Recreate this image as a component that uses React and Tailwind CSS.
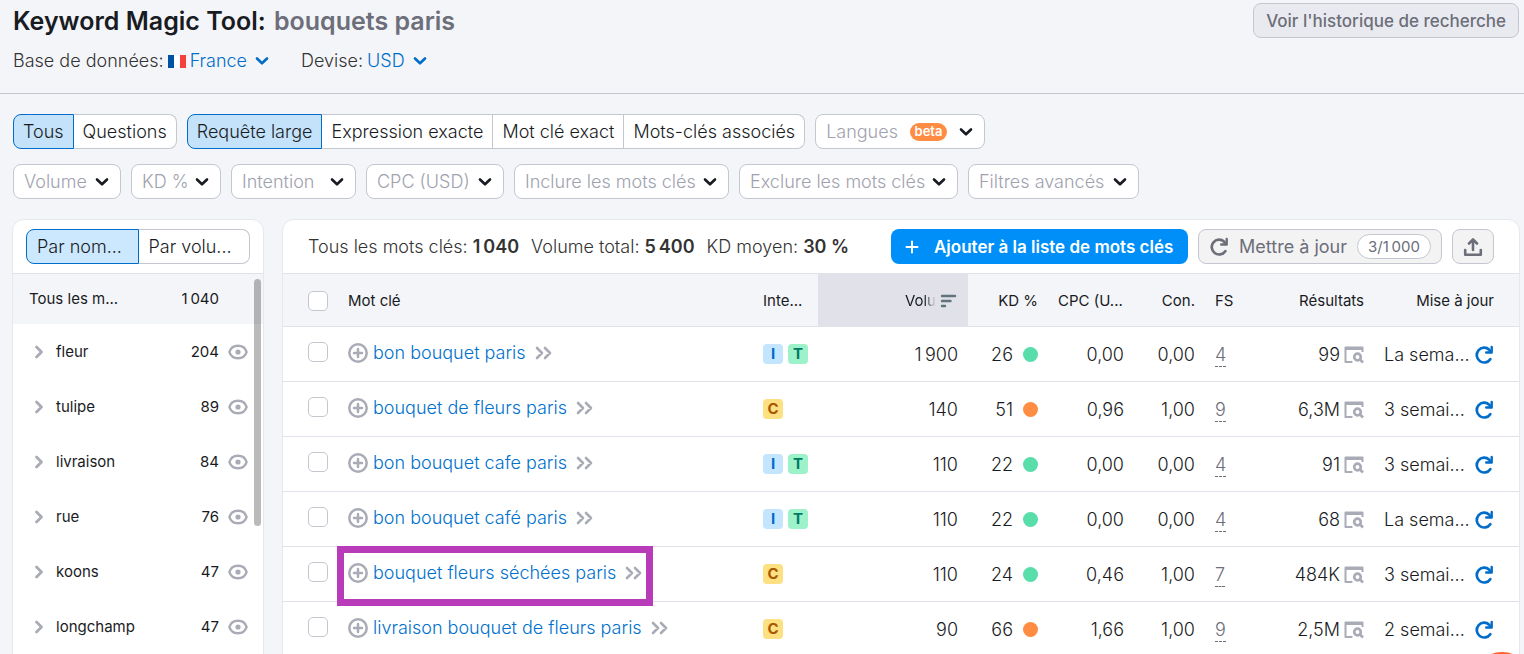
import { useState } from "react";

const matchTypes = [
  "Requête large",
  "Expression exacte",
  "Mot clé exact",
  "Mots-clés associés",
];

const filters = [
  { label: "Volume", width: "w-[108px]" },
  { label: "KD %", width: "w-[90px]" },
  { label: "Intention", width: "w-[125px]" },
  { label: "CPC (USD)", width: "w-[138px]" },
  { label: "Inclure les mots clés", width: "w-[215px]" },
  { label: "Exclure les mots clés", width: "w-[219px]" },
  { label: "Filtres avancés", width: "w-[171px]" },
];

const groups = [
  { name: "fleur", count: 204 },
  { name: "tulipe", count: 89 },
  { name: "livraison", count: 84 },
  { name: "rue", count: 76 },
  { name: "koons", count: 47 },
  { name: "longchamp", count: 47 },
];

const keywords = [
  { keyword: "bon bouquet paris", intents: ["I", "T"], volume: "1\u202f900", kd: 26, cpc: "0,00", con: "0,00", fs: 4, results: "99", updated: "La sema..." },
  { keyword: "bouquet de fleurs paris", intents: ["C"], volume: "140", kd: 51, cpc: "0,96", con: "1,00", fs: 9, results: "6,3M", updated: "3 semai..." },
  { keyword: "bon bouquet cafe paris", intents: ["I", "T"], volume: "110", kd: 22, cpc: "0,00", con: "0,00", fs: 4, results: "91", updated: "3 semai..." },
  { keyword: "bon bouquet café paris", intents: ["I", "T"], volume: "110", kd: 22, cpc: "0,00", con: "0,00", fs: 4, results: "68", updated: "La sema..." },
  { keyword: "bouquet fleurs séchées paris", intents: ["C"], volume: "110", kd: 24, cpc: "0,46", con: "1,00", fs: 7, results: "484K", updated: "3 semai...", highlighted: true },
  { keyword: "livraison bouquet de fleurs paris", intents: ["C"], volume: "90", kd: 66, cpc: "1,66", con: "1,00", fs: 9, results: "2,5M", updated: "2 semai..." },
];

const intentColors = {
  I: "bg-[#c4e5fe] text-[#006dca]",
  T: "bg-[#9ef2c9] text-[#007c65]",
  C: "bg-[#fce081] text-[#a75800]",
};

// =========================
// Icons
// =========================

const ChevronDown = ({ className = "" }) => (
  <svg viewBox="0 0 14 10" className={`w-[14px] h-[10px] shrink-0 ${className}`} fill="none" stroke="currentColor" strokeWidth="2.6" strokeLinecap="round" strokeLinejoin="round">
    <path d="M2 2.5 7 7.3l5-4.8" />
  </svg>
);

const ChevronRight = () => (
  <svg viewBox="0 0 10 14" className="w-[10px] h-[14px] text-[#a9abb6]" fill="none" stroke="currentColor" strokeWidth="2.8" strokeLinecap="round" strokeLinejoin="round">
    <path d="M2.5 2 7.5 7l-5 5" />
  </svg>
);

const DoubleChevron = () => (
  <svg viewBox="0 0 17 14" className="w-[17px] h-[14px] text-[#a9abb6]" fill="none" stroke="currentColor" strokeWidth="2.6" strokeLinecap="round" strokeLinejoin="round">
    <path d="M2 2 7 7l-5 5M10 2l5 5-5 5" />
  </svg>
);

const EyeIcon = () => (
  <svg viewBox="0 0 20 16" className="w-5 h-4 text-[#a9abb6]" fill="none" stroke="currentColor" strokeWidth="2.5">
    <path d="M1.400 8C2.600 4 5.800 1.800 10 1.800S17.400 4 18.600 8C17.400 12 14.200 14.200 10 14.200S2.600 12 1.400 8Z" />
    <circle cx="10" cy="8" r="2.6" fill="currentColor" stroke="none" />
  </svg>
);

const PlusCircle = () => (
  <svg viewBox="0 0 20 20" className="w-5 h-5 text-[#a9abb6]" fill="none" stroke="currentColor" strokeWidth="2.5" strokeLinecap="round">
    <circle cx="10" cy="10" r="8.7" />
    <path d="M10 6v8M6 10h8" />
  </svg>
);

const RefreshIcon = () => (
  <svg viewBox="0 0 20 20" className="w-5 h-5 shrink-0" fill="none" stroke="currentColor" strokeWidth="2.700">
    <path d="M16.300 14.200A7.400 7.400 0 1 1 15.200 4.700" strokeLinecap="round" />
    <path d="M17.700 2v5.500h-5.500" strokeWidth="2.400" strokeLinecap="round" strokeLinejoin="round" />
    <path d="M17.700 3.500v4h-4z" fill="currentColor" stroke="none" />
  </svg>
);

const SerpIcon = () => (
  <svg viewBox="0 0 20 18" className="w-5 h-[18px] text-[#a9abb6]" fill="none" stroke="currentColor">
    <path d="M.5 1.500a1 1 0 0 1 1-1h17a1 1 0 0 1 1 1V6h-2V4h-15v11H7a1 1 0 0 1 1 2H1.500a1 1 0 0 1-1-1z" fill="currentColor" stroke="none" />
    <circle cx="13.500" cy="11" r="3.300" strokeWidth="2.700" />
    <path d="M16 13.500 19 16.500" strokeWidth="2.700" />
  </svg>
);

const SortIcon = () => (
  <svg viewBox="0 0 17 14" className="w-[17px] h-[14px] text-[#5f747b]" fill="none" stroke="currentColor" strokeWidth="2.400" strokeLinecap="round">
    <path d="M2 2h13M2 7h8.500M2 12h3" />
  </svg>
);

const UploadIcon = () => (
  <svg viewBox="0 0 20 20" className="w-5 h-5" fill="none" stroke="currentColor" strokeWidth="2.600" strokeLinecap="round" strokeLinejoin="round">
    <path d="M10 13V3M6 6.500 10 2.500l4 4M2.200 13v4.800h15.600V13" />
  </svg>
);

const FrenchFlag = () => (
  <svg viewBox="0 0 18 13" className="w-[18px] h-[13px]">
    <rect width="18" height="13" fill="#fff" />
    <rect width="6" height="13" fill="#0052a5" />
    <rect x="12" width="6" height="13" fill="#f5413b" />
  </svg>
);

// =========================
// Controls
// =========================

const ToggleGroup = ({ options, active, onChange, buttonClass = "px-[9px]", activeClass = "bg-[#c4e2fa]" }) => (
  <div className="flex">
    {options.map((option, i) => (
      <button
        key={option}
        type="button"
        onClick={() => onChange(option)}
        className={`
          h-[35px] border text-left whitespace-nowrap text-[#191b23]
          ${buttonClass}
          ${i > 0 ? "border-l-0" : "rounded-l-lg"}
          ${i === options.length - 1 ? "rounded-r-lg" : ""}
          ${option === active ? `border-[#006dca] ${activeClass}` : "border-[#c4c7cf] bg-white"}
        `}
      >
        {option}
      </button>
    ))}
  </div>
);

const FilterButton = ({ label, width, children }) => (
  <button
    type="button"
    className={`
      ${width} h-[35px] shrink-0 flex items-center justify-between
      border border-[#c4c7cf] rounded-lg bg-white
      pl-[10px] pr-[11px] whitespace-nowrap text-[#a0a2ae]
    `}
  >
    {label}
    {children}
    <ChevronDown className="text-[#191b23]" />
  </button>
);

const Checkbox = ({ label }) => (
  <input
    type="checkbox"
    aria-label={label}
    className="block w-5 h-5 appearance-none rounded-[5px] border border-[#c4c7cf] bg-white checked:bg-[#008ff8]"
  />
);

// =========================
// Sidebar
// =========================

const GroupSidebar = () => {
  const [sort, setSort] = useState("Par nom...");

  return (
    <aside className="w-[252px] shrink-0 bg-white border border-[#e6e8ee] rounded-t-xl">
      <div className="h-[54px] px-[13px] pt-[9px] border-b border-[#e0e1e9]">
        <ToggleGroup
          options={["Par nom...", "Par volu..."]}
          active={sort}
          onChange={setSort}
          buttonClass="px-[10px] flex-1"
          activeClass="bg-[#cce8fe]"
        />
      </div>

      <div className="relative text-[15px] font-normal">
        <div className="h-[50px] flex items-center bg-[#f4f5f9] pl-4 pr-[44px]">
          <span className="flex-1">Tous les m...</span>
          <span>1{"\u202f"}040</span>
        </div>

        {groups.map((group) => (
          <div key={group.name} className="h-[55px] flex items-center pl-[21px] pr-[15px]">
            <button type="button" aria-label={`Ouvrir ${group.name}`}>
              <ChevronRight />
            </button>
            <span className="flex-1 pl-3">{group.name}</span>
            <span className="pr-[9px]">{group.count}</span>
            <button type="button" aria-label={`Masquer ${group.name}`}>
              <EyeIcon />
            </button>
          </div>
        ))}

        {/* Scrollbar thumb */}
        <div className="absolute top-[5px] right-[2px] w-[7px] h-[247px] rounded-full bg-black/27" />
      </div>
    </aside>
  );
};

// =========================
// Table
// =========================

const KeywordTable = () => (
  <table className="w-full table-fixed border-collapse text-[18px]">
    <colgroup>
      <col className="w-[55px]" />
      <col />
      <col className="w-[65px]" />
      <col className="w-[150px]" />
      <col className="w-[80px]" />
      <col className="w-[86px]" />
      <col className="w-[71px]" />
      <col className="w-[50px]" />
      <col className="w-[119px]" />
      <col className="w-[145px]" />
    </colgroup>

    <thead>
      <tr className="h-[52px] bg-[#f4f5f9] border-b border-[#e0e1e9] text-[15px] whitespace-nowrap [&>th]:font-normal [&>th]:pt-[2px]">
        <th className="pl-[25px]">
          <Checkbox label="Tout sélectionner" />
        </th>
        <th className="px-[10px] text-left">Mot clé</th>
        <th className="px-[10px] text-left">Inte...</th>
        <th className="px-[11px] bg-[#e0e1e9]" aria-sort="descending">
          <div className="flex items-center justify-end gap-1">
            <span className="[mask-image:linear-gradient(to_right,black_60%,transparent)]">Volu</span>
            <SortIcon />
          </div>
        </th>
        <th className="px-[10px] text-right">KD %</th>
        <th className="px-[10px] text-left">CPC (U...</th>
        <th className="px-[10px] text-right">Con.</th>
        <th className="px-[10px] text-left">FS</th>
        <th className="px-[10px] text-right">Résultats</th>
        <th className="pr-[25px] text-right">Mise à jour</th>
      </tr>
    </thead>

    <tbody>
      {keywords.map((row) => (
        <tr key={row.keyword} className="h-[55px] border-b border-[#e0e1e9] whitespace-nowrap">
          <td className="pl-[25px] pb-1">
            <Checkbox label={row.keyword} />
          </td>
          <td className="px-[10px] pb-[2px]">
            <div className="relative flex w-max items-center">
              <button type="button" aria-label="Ajouter">
                <PlusCircle />
              </button>
              <a href="#" className="ml-[5px] mr-[9px] text-[#0071cd]">
                {row.keyword}
              </a>
              <DoubleChevron />
              {row.highlighted && (
                <div className="absolute -inset-x-[11px] -top-[15px] h-[60px] border-[7px] border-[#b83cba]" />
              )}
            </div>
          </td>
          <td className="px-[10px]">
            <div className="flex gap-[5px]">
              {row.intents.map((intent) => (
                <span
                  key={intent}
                  className={`w-5 h-5 shrink-0 flex items-center justify-center rounded text-[15px] font-bold ${intentColors[intent]}`}
                >
                  {intent}
                </span>
              ))}
            </div>
          </td>
          <td className="px-[10px] pt-[2px] text-right">{row.volume}</td>
          <td className="px-[10px] pt-[2px]">
            <div className="flex items-center justify-end gap-[10px]">
              {row.kd}
              <span className={`w-[15px] h-[15px] rounded-full ${row.kd < 50 ? "bg-[#59ddaa]" : "bg-[#ff8c43]"}`} />
            </div>
          </td>
          <td className="px-[10px] pt-[2px] text-right">{row.cpc}</td>
          <td className="px-[10px] pt-[2px] text-right">{row.con}</td>
          <td className="px-[10px] pt-[2px]">
            <a href="#" className="inline-block leading-[22px] text-[#6c6e79] border-b border-dashed border-[#6c6e79]">
              {row.fs}
            </a>
          </td>
          <td className="px-[10px] pt-[2px]">
            <div className="flex items-center justify-end gap-1">
              {row.results}
              <SerpIcon />
            </div>
          </td>
          <td className="pl-[10px] pr-[25px] pt-[2px]">
            <div className="flex items-center justify-between">
              {row.updated}
              <button type="button" aria-label="Mettre à jour" className="text-[#006dca]">
                <RefreshIcon />
              </button>
            </div>
          </td>
        </tr>
      ))}
    </tbody>
  </table>
);

const App = () => {
  const [scope, setScope] = useState("Tous");
  const [matchType, setMatchType] = useState("Requête large");

  return (
    <div className="h-screen overflow-hidden bg-[#f4f5f9] font-['Inter',sans-serif] font-light text-[18px] leading-6 text-[#191b23]">
      {/* Header */}
      <header className="h-[94px] border-b border-[#c4c7cf] pl-[13px] pr-[5px] flex justify-between items-start">
        <div>
          <h1 className="mt-[5px] text-[25px] leading-8 font-semibold">
            Keyword Magic Tool: <span className="ml-[2px] text-[#6c6e79]">bouquets paris</span>
          </h1>
          <div className="mt-3 flex items-center text-[#333]">
            <span>Base de données:</span>
            <button type="button" className="ml-1 flex items-center text-[#006dca]">
              <FrenchFlag />
              <span className="ml-1 mr-2">France</span>
              <ChevronDown />
            </button>
            <span className="ml-8">Devise:</span>
            <button type="button" className="ml-1 flex items-center gap-2 text-[#006dca]">
              USD
              <ChevronDown />
            </button>
          </div>
        </div>
        <button
          type="button"
          className="mt-[3px] h-[35px] px-3 border border-[#c4c7cf] rounded-lg bg-[#e9eaef] text-[17px] font-medium text-[#6c6e79]"
        >
          Voir l'historique de recherche
        </button>
      </header>

      {/* Filters */}
      <div className="flex gap-[10px] pl-[13px] pt-5">
        <ToggleGroup options={["Tous", "Questions"]} active={scope} onChange={setScope} />
        <ToggleGroup options={matchTypes} active={matchType} onChange={setMatchType} />
        <FilterButton label="Langues" width="w-[170px]">
          <span className="h-[18px] px-[5px] rounded-full bg-[#ff8c43] text-white text-[13px] leading-[17px] font-semibold">
            beta
          </span>
        </FilterButton>
      </div>
      <div className="flex gap-[10px] pl-[13px] pt-[15px]">
        {filters.map((filter) => (
          <FilterButton key={filter.label} {...filter} />
        ))}
      </div>

      <div className="flex items-start gap-[18px] pl-3 pr-1 pt-5">
        <GroupSidebar />

        {/* Results */}
        <main className="flex-1 min-w-0 bg-white border border-[#e6e8ee] rounded-t-xl">
          <div className="h-[54px] flex items-center border-b border-[#e0e1e9] px-[25px] whitespace-nowrap">
            <div className="flex flex-1 gap-3 text-[#333]">
              <span>Tous les mots clés: <b className="font-semibold">1{"\u202f"}040</b></span>
              <span>Volume total: <b className="font-semibold">5{"\u202f"}400</b></span>
              <span>KD moyen: <b className="font-semibold">30 %</b></span>
            </div>
            <div className="flex gap-[10px]">
              <button
                type="button"
                className="h-[35px] w-[297px] px-[11px] flex items-center gap-3 rounded-lg bg-[#008ff8] text-white text-[17px] font-semibold"
              >
                <svg viewBox="0 0 20 20" className="w-5 h-5" stroke="currentColor" strokeWidth="2" strokeLinecap="round">
                  <path d="M10 4.500v11M4.500 10h11" />
                </svg>
                Ajouter à la liste de mots clés
              </button>
              <button
                type="button"
                className="h-[35px] w-[244px] px-[10px] flex items-center justify-between border border-[#c4c7cf] rounded-lg bg-[#f3f3f4] text-[#6c6e79] font-normal"
              >
                <RefreshIcon />
                Mettre à jour
                <span className="h-[25px] px-[10px] border border-[#c4c7cf] rounded-full bg-white text-[15px] leading-[23px]">
                  3/1{"\u202f"}000
                </span>
              </button>
              <button
                type="button"
                aria-label="Exporter"
                className="h-[35px] w-[42px] flex items-center justify-center border border-[#c4c7cf] rounded-lg bg-[#f3f3f4] text-[#6c6e79]"
              >
                <UploadIcon />
              </button>
            </div>
          </div>

          <KeywordTable />
        </main>
      </div>

      {/* Chat bubble */}
      <button
        type="button"
        aria-label="Aide"
        className="fixed -right-2 -bottom-[58px] w-[60px] h-[60px] rounded-full bg-[#ff622d]"
      />
    </div>
  );
};

export default App;
